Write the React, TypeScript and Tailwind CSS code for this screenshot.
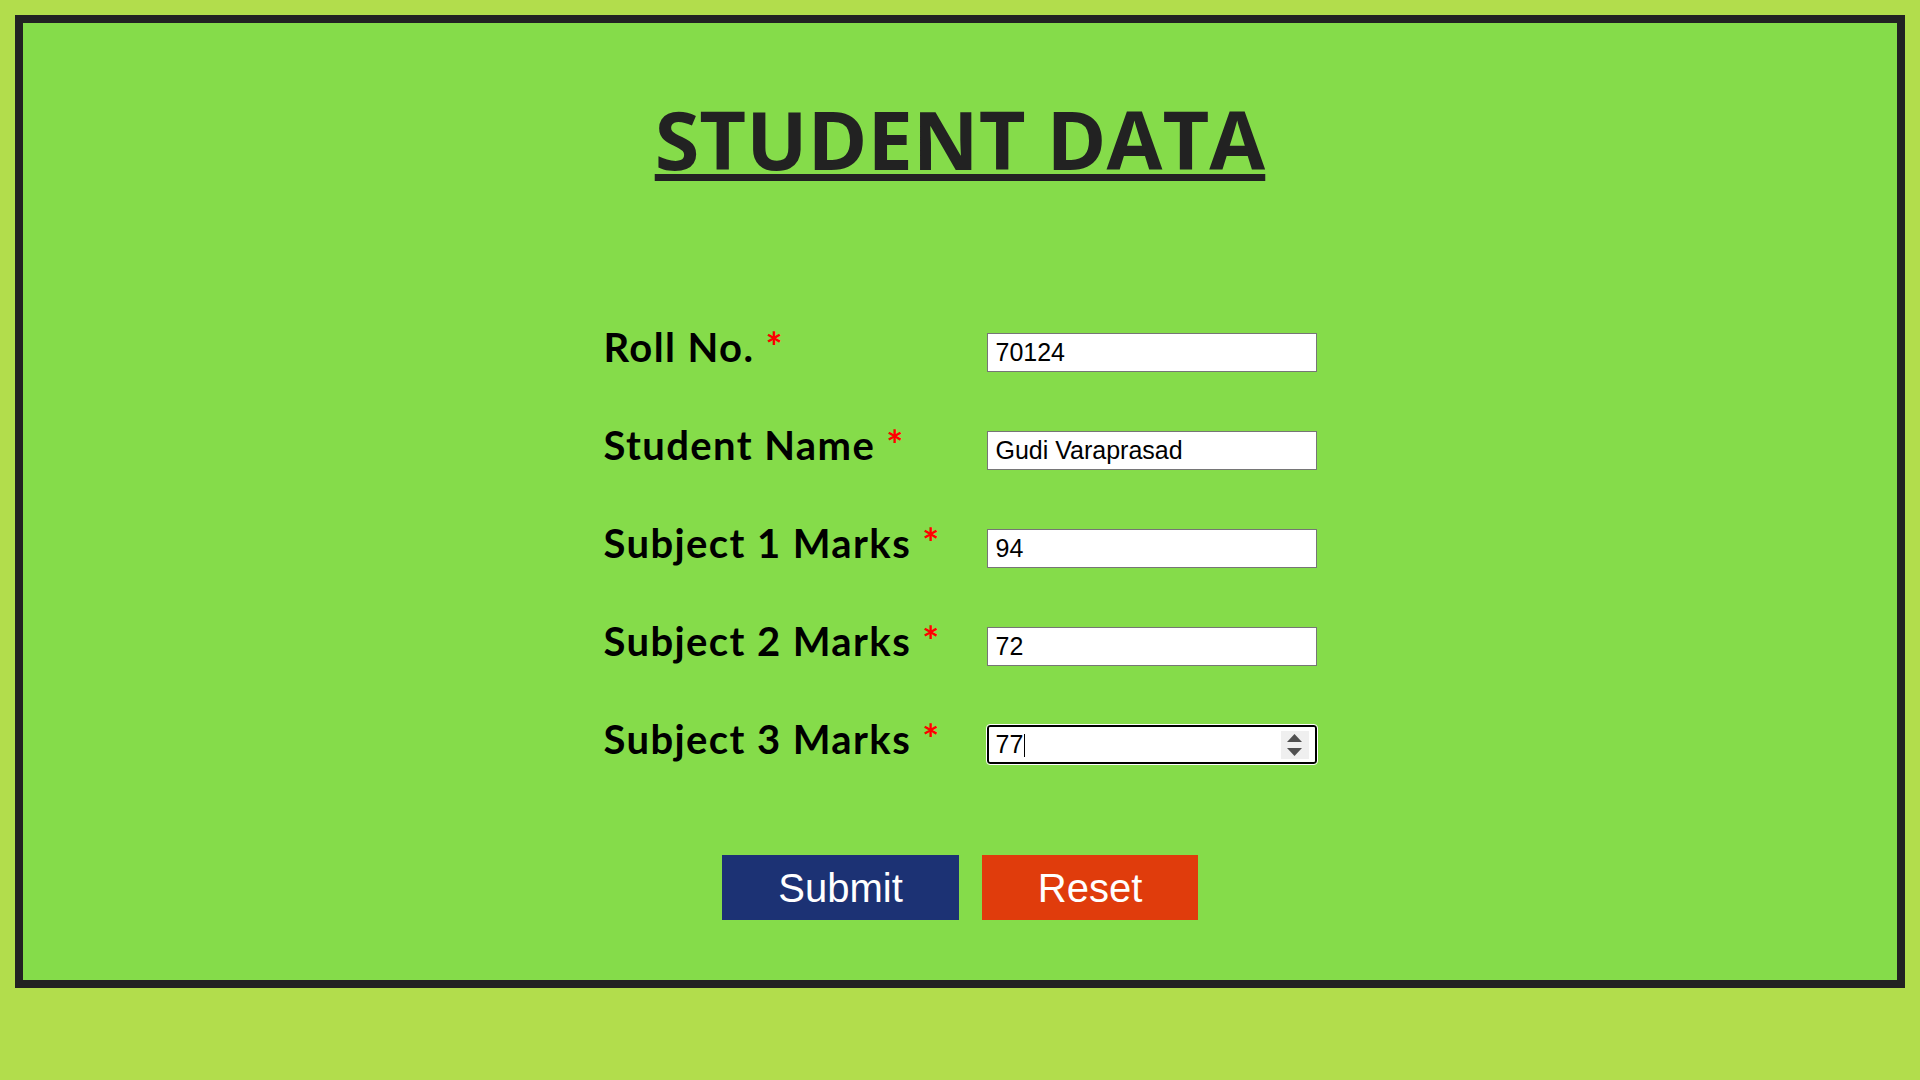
import React from 'react';

const fields = [
  { label: 'Roll No.', value: '70124' },
  { label: 'Student Name', value: 'Gudi Varaprasad' },
  { label: 'Subject 1 Marks', value: '94' },
  { label: 'Subject 2 Marks', value: '72' },
];

export default function App() {
  return (
    <div className="min-h-screen bg-[#b2dd4c] px-[15px] pt-[15px]">
      <div className="h-[973px] border-8 border-[#222222] bg-[#85dc4a] flex flex-col items-center">
        <h1 className="mt-[75px] font-['Open_Sans',sans-serif] text-[81px] leading-none font-bold text-[#222222] underline decoration-[7px] underline-offset-[4px]">
          STUDENT DATA
        </h1>

        <form className="mt-[154px] grid grid-cols-[383px_330px] gap-y-[59px] items-start">
          {fields.map((f) => (
            <React.Fragment key={f.label}>
              <label className="font-['Lato',sans-serif] text-[40px] leading-[39px] font-bold tracking-[1.4px] text-black -translate-y-[5px]">
                {f.label} <span className="text-[#ff0000]">*</span>
              </label>
              <input
                readOnly
                defaultValue={f.value}
                className="h-[39px] w-[330px] border border-[#767676] bg-white px-[8px] font-['Liberation_Sans',Arial,sans-serif] text-[25px] text-black outline-none"
              />
            </React.Fragment>
          ))}
          <label className="font-['Lato',sans-serif] text-[40px] leading-[39px] font-bold tracking-[1.4px] text-black -translate-y-[5px]">
            Subject 3 Marks <span className="text-[#ff0000]">*</span>
          </label>
          <div className="relative h-[39px] w-[330px]">
            <input
              readOnly
              defaultValue="77"
              className="h-full w-full rounded-[3px] border-2 border-black bg-white pl-[7px] pr-[40px] font-['Liberation_Sans',Arial,sans-serif] text-[25px] text-black outline outline-1 outline-white"
            />
            <span className="absolute left-[37px] top-[9px] h-[23px] w-px bg-black" />
            <span className="absolute right-[8px] top-[6px] flex h-[28px] w-[28px] flex-col items-center justify-center gap-[6px] bg-[#efefef]">
              <svg width="15" height="8" viewBox="0 0 15 8">
                <path d="M7.5 0 L15 8 L0 8 Z" fill="#505050" />
              </svg>
              <svg width="15" height="8" viewBox="0 0 15 8">
                <path d="M0 0 L15 0 L7.5 8 Z" fill="#505050" />
              </svg>
            </span>
          </div>
        </form>

        <div className="mt-[91px] flex gap-[23px]">
          <button
            type="button"
            className="h-[65px] w-[237px] bg-[#1c3274] font-['Liberation_Sans',Arial,sans-serif] text-[40px] text-white"
          >
            Submit
          </button>
          <button
            type="button"
            className="h-[65px] w-[216px] bg-[#e03c0c] font-['Liberation_Sans',Arial,sans-serif] text-[40px] text-white"
          >
            Reset
          </button>
        </div>
      </div>
    </div>
  );
}
